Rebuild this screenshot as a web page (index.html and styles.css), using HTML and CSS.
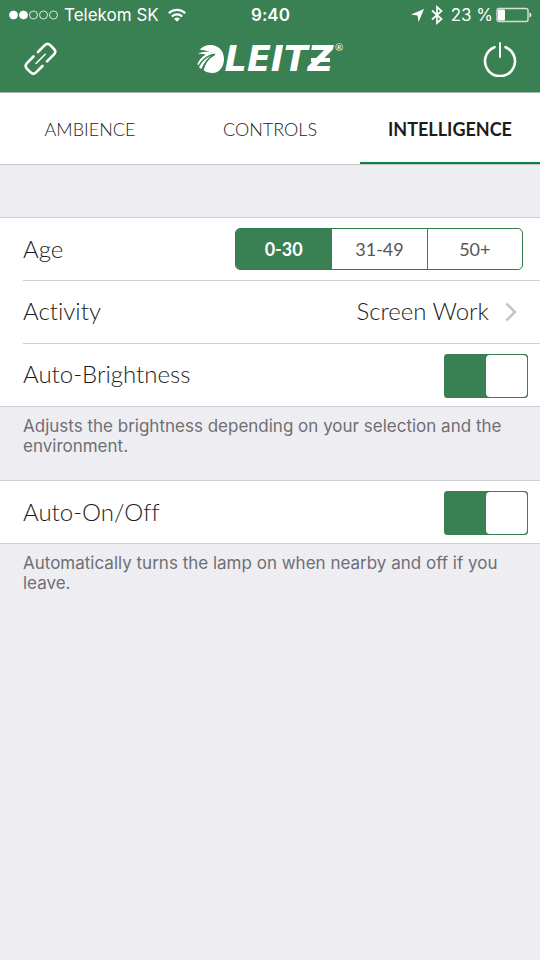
FILE: index.html
```html
<!DOCTYPE html>
<html lang="en">
<head>
<meta charset="utf-8">
<meta name="viewport" content="width=device-width, initial-scale=1">
<title>Leitz – Intelligence</title>
<link rel="stylesheet" href="styles.css">
</head>
<body>
<header class="top">
  <div class="status">
    <div class="status-left">
      <svg class="signal" width="50" height="10" viewBox="0 0 50 10" aria-hidden="true">
        <g stroke="#fff" stroke-width="0.8">
          <circle cx="4.5" cy="5" r="4" fill="#fff"/><circle cx="14.5" cy="5" r="4" fill="#fff"/>
          <circle cx="24.5" cy="5" r="4" fill="none"/><circle cx="34.5" cy="5" r="4" fill="none"/><circle cx="44.5" cy="5" r="4" fill="none"/>
        </g>
      </svg>
      <span class="carrier">Telekom SK</span>
      <svg class="wifi" width="18" height="14" viewBox="0 0 18 14" aria-hidden="true">
        <g fill="none" stroke="#fff" stroke-width="2.2"><path d="M.8 5.2a11.6 11.6 0 0 1 16.4 0"/><path d="M3.8 8.5a7.400 7.400 0 0 1 10.400 0"/></g>
        <path d="M6 10.800a4.500 4.500 0 0 1 6 0L9 13.800z" fill="#fff"/>
      </svg>
    </div>
    <span class="time">9:40</span>
    <div class="status-right">
      <svg width="13" height="13" viewBox="0 0 13 13" aria-hidden="true"><path d="M13 0L7.600 13 6.600 6.600 0 5.600z" fill="#fff"/></svg>
      <svg class="bluetooth" width="12" height="20" viewBox="0 0 12 20" aria-hidden="true"><path d="M1 5.500l9.500 8.500L6 18V2l4.500 4L1 14.500" fill="none" stroke="#fff" stroke-width="1.700"/></svg>
      <span class="percent">23 %</span>
      <svg width="36" height="16" viewBox="0 0 36 16" aria-hidden="true">
        <rect x="1" y="1.500" width="31" height="13" rx="2" fill="none" stroke="#d3e1d7" stroke-width="1.400"/>
        <rect x="2" y="2.500" width="7" height="11" rx="1" fill="#fff"/>
        <path d="M33.500 5.500a2.600 2.600 0 0 1 0 5z" fill="#fff"/>
      </svg>
    </div>
  </div>
  <div class="nav">
    <button class="icon-button" type="button" aria-label="Connect">
      <svg width="36" height="36" viewBox="0 0 36 36" aria-hidden="true">
        <g fill="none" stroke="#fff" stroke-width="2.600" stroke-linecap="round" stroke-linejoin="round">
          <path d="M15 11L21.800 4.200Q24.500 1.500 27.200 4.200L31 8Q33.700 10.700 31 13.400L24 20.400"/>
          <path d="M10.500 15.500L4 22.200Q1.300 25 4 27.800L7.600 31.400Q10.300 34.100 13 31.400L19.500 25"/>
          <path d="M13 22.500l9.200-9.200" stroke-width="1.500"/>
        </g>
      </svg>
    </button>
    <div class="brand">
      <svg width="28" height="30" viewBox="0 0 84 90" aria-hidden="true">
        <path d="M8 17C18 5 35 0 49 4C68 8 81 24 81 45C81 69 66 87 47 87C36 87 26 85 20 79C26 56 37 41 55 30C43 26 25 17 8 17Z" fill="#fff"/>
        <path d="M3 31C17 20 37 23 52 29C34 32 17 43 5 64L1 61C6 48 15 37 26 32C18 29 10 28 3 31Z" fill="#fff"/>
        <path d="M6 69C15 50 28 37 48 32C33 42 21 57 13 76Z" fill="#fff"/>
        <path d="M5 66C16 47 29 37 48 31M15 77C22 57 34 41 54 31" fill="none" stroke="#398052" stroke-width="4"/>
      </svg>
      <span class="brand-name">LEITZ</span>
      <span class="registered">®</span>
    </div>
    <button class="icon-button" type="button" aria-label="Power">
      <svg width="34" height="36" viewBox="0 0 34 36" aria-hidden="true">
        <path d="M11.500 6.200a15 15 0 1 0 11 0" fill="none" stroke="#fff" stroke-width="2.600" stroke-linecap="round"/>
        <path d="M17 2v14" stroke="#fff" stroke-width="2" stroke-linecap="round"/>
      </svg>
    </button>
  </div>
</header>
<nav class="tabs">
  <a href="#ambience">AMBIENCE</a>
  <a href="#controls">CONTROLS</a>
  <a href="#intelligence" class="active" aria-current="page">INTELLIGENCE</a>
</nav>
<main>
  <section class="group">
    <div class="row age">
      <span class="label" id="age-label">Age</span>
      <div class="segments" role="radiogroup" aria-labelledby="age-label">
        <label class="segment"><input type="radio" name="age" checked><span>0-30</span></label>
        <label class="segment"><input type="radio" name="age"><span>31-49</span></label>
        <label class="segment"><input type="radio" name="age"><span>50+</span></label>
      </div>
    </div>
    <button class="row activity" type="button">
      <span class="label">Activity</span>
      <span class="value">Screen Work</span>
      <svg width="12" height="20" viewBox="0 0 12 20" aria-hidden="true"><path d="M1.500 1.500L10 10l-8.500 8.500" fill="none" stroke="#c4c4c8" stroke-width="2.500"/></svg>
    </button>
    <div class="row">
      <label class="label" for="brightness">Auto-Brightness</label>
      <input class="switch" id="brightness" type="checkbox" role="switch" checked>
    </div>
  </section>
  <p class="note">Adjusts the brightness depending on your selection and the environment.</p>
  <section class="group">
    <div class="row">
      <label class="label" for="onoff">Auto-On/Off</label>
      <input class="switch" id="onoff" type="checkbox" role="switch" checked>
    </div>
  </section>
  <p class="note">Automatically turns the lamp on when nearby and off if you leave.</p>
</main>
</body>
</html>
```
FILE: styles.css
```css
* { box-sizing: border-box; }
body {
  margin: 0;
  min-height: 100vh;
  background: #eeedf2;
  color: #1c1c1c;
  font-family: Lato, "Noto Sans", sans-serif;
  font-variant-ligatures: none;
}
button { margin: 0; border: 0; background: none; font: inherit; color: inherit; text-align: left; cursor: pointer; }
svg { display: block; flex: none; }
.top { background: #398052; color: #fff; border-bottom: 1px solid #a9b8ae; }
.status {
  display: grid;
  grid-template-columns: 1fr auto 1fr;
  align-items: center;
  height: 30px;
  padding: 0 8px 0 9px;
  font-family: Inter, sans-serif;
  font-size: 17px;
}
.status-left, .status-right { display: flex; align-items: center; }
.status-right { justify-content: flex-end; }
.carrier { margin: 0 9px 0 5px; }
.time { font-weight: 600; }
.bluetooth { margin: 0 8px 0 7px; }
.percent { margin-right: 3px; }
.nav {
  display: grid;
  grid-template-columns: 1fr auto 1fr;
  align-items: center;
  height: 62px;
  padding: 0 23px 4px;
}
.icon-button { padding: 0; justify-self: start; }
.icon-button:last-child { justify-self: end; }
.brand { display: flex; align-items: center; }
.brand-name { position: relative; font: italic 700 35px/36px "DejaVu Sans", sans-serif; }
/* Crossbar of the wordmark's Z */
.brand-name::after {
  content: "";
  position: absolute;
  right: 3px;
  top: 17px;
  width: 19px;
  height: 4px;
  background: #fff;
}
.registered { align-self: flex-start; margin-left: 2px; font-size: 10px; line-height: 12px; }
.tabs {
  display: grid;
  grid-template-columns: repeat(3, 1fr);
  height: 72px;
  background: #fff;
  border-bottom: 1px solid #c8c7cc;
}
.tabs a {
  display: flex;
  align-items: center;
  justify-content: center;
  color: inherit;
  font-size: 18px;
  font-weight: 300;
  text-decoration: none;
}
.tabs .active { font-weight: 700; box-shadow: inset 0 -2px #0d8044; }
main { padding-top: 52px; }
.group { background: #fff; border: solid #cfced3; border-width: 1px 0; }
.row {
  display: flex;
  align-items: center;
  width: 100%;
  height: 62px;
  padding: 0 12px 0 23px;
  font-size: 24px;
  font-weight: 300;
}
.row + .row { height: 63px; background: linear-gradient(#d0d0d3, #d0d0d3) 23px 0 / 100% 1px no-repeat; }
.label, .value { padding-bottom: 2px; }
.label { flex: 1; }
.row.age { padding-right: 17px; }
.segments {
  display: grid;
  grid-template-columns: repeat(3, 1fr);
  width: 288px;
  height: 42px;
  border: 1px solid #2d7d4c;
  border-radius: 5px;
  overflow: hidden;
}
.segment { display: grid; font-size: 18px; font-weight: 400; color: #555; }
.segment + .segment { border-left: 1px solid #398052; }
.segment input { appearance: none; grid-area: 1 / 1; margin: 0; }
.segment span { grid-area: 1 / 1; display: grid; place-items: center; }
.segment input:checked + span { background: #398052; color: #fff; font-weight: 700; }
.row.activity { padding-right: 23px; }
.value { margin-right: 16px; }
.switch {
  appearance: none;
  width: 84px;
  height: 44px;
  margin: 2px 0 0;
  border: 1px solid #398052;
  border-radius: 3px;
  background: #fff;
  cursor: pointer;
}
.switch::before { content: ""; display: block; width: 41px; height: 42px; border-radius: 4px; background: #fff; }
.switch:checked { background: #398052; }
.switch:checked::before { margin-left: auto; }
.note {
  margin: 0;
  padding: 9px 23px 24px;
  font-family: Inter, sans-serif;
  font-size: 17px;
  line-height: 20px;
  color: #6f6f74;
}
```
